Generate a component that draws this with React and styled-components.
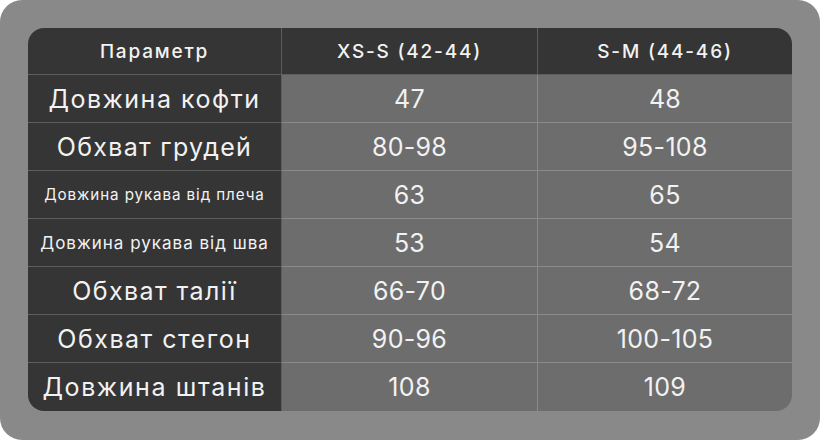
import React from 'react';
import styled, { createGlobalStyle } from 'styled-components';

const Global = createGlobalStyle`
	html, body {
		margin: 0;
		padding: 0;
		background: #ffffff;
	}
	body {
		font-family: Inter, "Noto Sans", sans-serif;
	}
`;

const Card = styled.div`
	width: 820px;
	height: 440px;
	box-sizing: border-box;
	padding: 28px;
	background: #898989;
	border-radius: 22px;
`;

const Table = styled.div`
	display: grid;
	grid-template-columns: 254px 256px 254px;
	grid-template-rows: 47px repeat(7, 48px);
	border-radius: 16px;
	overflow: hidden;
`;

const Cell = styled.div`
	display: flex;
	align-items: center;
	justify-content: center;
	box-sizing: border-box;
	background: ${(p) => (p.$dark ? '#353535' : '#6d6d6d')};
	color: #f2f2f2;
	font-size: ${(p) => p.$size}px;
	font-weight: ${(p) => (p.$head ? 500 : 400)};
	letter-spacing: ${(p) => p.$spacing || 0}px;
	white-space: nowrap;
	border-right: ${(p) => (p.$last ? 'none' : '1px solid rgba(255,255,255,0.2)')};
	border-bottom: ${(p) => (p.$bottom ? 'none' : '1px solid rgba(255,255,255,0.2)')};
`;

const rows = [
	{ name: 'Довжина кофти', size: 25, sp: 1.5, a: '47', b: '48' },
	{ name: 'Обхват грудей', size: 25, sp: 1.3, a: '80-98', b: '95-108' },
	{ name: 'Довжина рукава від плеча', size: 15.2, sp: 0.9, a: '63', b: '65' },
	{ name: 'Довжина рукава від шва', size: 17, sp: 1.0, a: '53', b: '54' },
	{ name: 'Обхват талії', size: 25, sp: 1.4, a: '66-70', b: '68-72' },
	{ name: 'Обхват стегон', size: 25, sp: 1.5, a: '90-96', b: '100-105' },
	{ name: 'Довжина штанів', size: 25, sp: 1.6, a: '108', b: '109' },
];

const App = () => {
	return (
		<>
			<Global />
			<Card>
				<Table>
					<Cell $dark $head $size={19} $spacing={1.8}>Параметр</Cell>
					<Cell $dark $head $size={19} $spacing={1.8}>XS-S (42-44)</Cell>
					<Cell $dark $head $last $size={19} $spacing={1.8}>S-M (44-46)</Cell>
					{rows.map((r, i) => {
						const bottom = i === rows.length - 1;
						return (
							<React.Fragment key={r.name}>
								<Cell $dark $bottom={bottom} $size={r.size} $spacing={r.sp}>{r.name}</Cell>
								<Cell $bottom={bottom} $size={25} $spacing={0.3}>{r.a}</Cell>
								<Cell $bottom={bottom} $last $size={25} $spacing={0.3}>{r.b}</Cell>
							</React.Fragment>
						);
					})}
				</Table>
			</Card>
		</>
	);
};

export default App;
